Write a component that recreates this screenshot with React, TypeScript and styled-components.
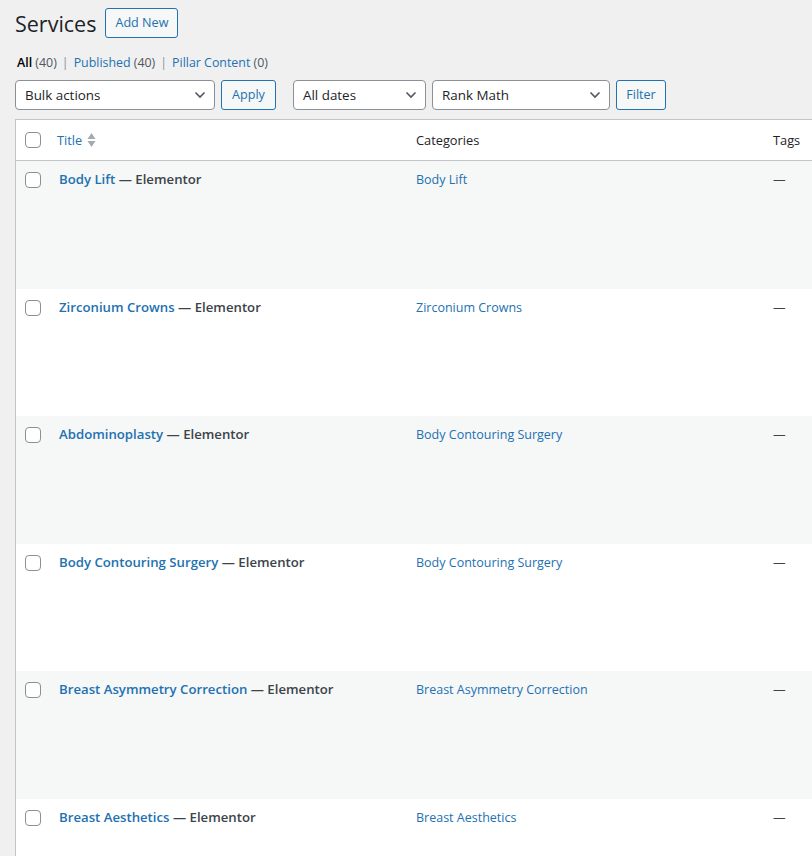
import React from 'react';
import styled, { createGlobalStyle } from 'styled-components';

const colors = {
  bg: '#f0f0f1',
  link: '#2271b1',
  text: '#3c434a',
  dark: '#1d2327',
  muted: '#50575e',
  border: '#c3c4c7',
  field: '#8c8f94',
  stripe: '#f6f7f7',
  white: '#ffffff',
};

const GlobalStyle = createGlobalStyle`
  html, body {
    margin: 0;
    background: ${colors.bg};
    overflow: hidden;
  }
  body {
    font-family: "Open Sans", "Noto Sans", sans-serif;
    font-size: 12.6px;
    color: ${colors.text};
  }
`;

const Page = styled.div`
  padding: 8px 0 0 15px;
  width: 900px;
`;

const Header = styled.div`
  display: flex;
  align-items: center;
  gap: 9px;
`;

const Heading = styled.h1`
  margin: 0;
  font-size: 21.5px;
  font-weight: 400;
  line-height: 29px;
  color: ${colors.dark};
`;

const Button = styled.button<{ $width?: number }>`
  box-sizing: border-box;
  height: 30px;
  width: ${(p) => (p.$width ? `${p.$width}px` : 'auto')};
  padding: 0 9px;
  font-family: inherit;
  font-size: 12.6px;
  color: ${colors.link};
  background: ${colors.stripe};
  border: 1px solid ${colors.link};
  border-radius: 3px;
  line-height: 1;
`;

const Views = styled.ul`
  display: flex;
  margin: 12px 0 0 2px;
  padding: 0;
  list-style: none;
  line-height: 26px;
  font-size: 12.4px;
  color: ${colors.muted};
`;

const ViewItem = styled.li`
  & + &::before {
    content: '|';
    margin: 0 5px;
    color: #8c8f94;
  }
`;

const ViewLink = styled.a<{ $current?: boolean }>`
  color: ${(p) => (p.$current ? '#000' : colors.link)};
  font-weight: ${(p) => (p.$current ? 600 : 400)};
  text-decoration: none;
`;

const Count = styled.span`
  color: ${colors.muted};
  font-weight: 400;
`;

const TableNav = styled.div`
  display: flex;
  align-items: center;
  margin-top: 4px;
  height: 30px;
`;

const Group = styled.div`
  display: flex;
  gap: 6px;
  & + & {
    margin-left: 17px;
  }
`;

const Select = styled.div<{ $width: number }>`
  box-sizing: border-box;
  width: ${(p) => p.$width}px;
  height: 30px;
  display: flex;
  align-items: center;
  justify-content: space-between;
  padding: 0 8px 0 9px;
  background: ${colors.white};
  border: 1px solid ${colors.field};
  border-radius: 4px;
  font-size: 13.4px;
  color: ${colors.dark};
`;

const Table = styled.div`
  margin-top: 9px;
  width: 849px;
  border: 1px solid ${colors.border};
  background: ${colors.white};
`;

const Row = styled.div<{ $striped?: boolean; $head?: boolean }>`
  display: grid;
  grid-template-columns: 32px 358px 357px 100px;
  height: ${(p) => (p.$head ? '40px' : '127.6px')};
  background: ${(p) => (p.$striped ? colors.stripe : colors.white)};
  border-bottom: ${(p) => (p.$head ? `1px solid ${colors.border}` : 'none')};
  align-items: ${(p) => (p.$head ? 'center' : 'start')};
`;

const CheckCell = styled.div<{ $head?: boolean }>`
  padding: ${(p) => (p.$head ? '0' : '11px')} 0 0 9px;
  display: flex;
`;

const Checkbox = styled.span`
  box-sizing: border-box;
  width: 16px;
  height: 16px;
  border: 1px solid ${colors.field};
  border-radius: 4px;
  background: ${colors.white};
`;

const HeadCell = styled.div<{ $pad?: number }>`
  padding-left: ${(p) => p.$pad ?? 10}px;
  font-size: 12.8px;
  color: ${colors.dark};
  display: flex;
  align-items: center;
  gap: 5px;
`;

const SortLink = styled.a`
  color: ${colors.link};
  text-decoration: none;
`;

const Cell = styled.div<{ $pad?: number; $top?: number }>`
  padding: ${(p) => p.$top ?? 8}px 0 0 ${(p) => p.$pad ?? 10}px;
  line-height: 20px;
`;

const RowTitle = styled.strong`
  font-size: 13.2px;
  font-weight: 600;
  color: ${colors.text};
`;

const TitleLink = styled.a`
  color: ${colors.link};
  text-decoration: none;
`;

const CatLink = styled.a`
  color: ${colors.link};
  text-decoration: none;
  font-size: 12.5px;
`;

const Dash = styled.span`
  color: ${colors.text};
`;

const Chevron = () => (
  <svg width="12" height="8" viewBox="0 0 12 8" aria-hidden>
    <path d="M1.5 1.5 L6 6 L10.5 1.5" fill="none" stroke="#50575e" strokeWidth="1.6" />
  </svg>
);

const SortIcon = () => (
  <svg width="9" height="16" viewBox="0 0 9 16" aria-hidden>
    <path d="M4.5 1 L8.5 7 H0.5 Z" fill="#a7aaad" />
    <path d="M4.5 15 L8.5 9 H0.5 Z" fill="#a7aaad" />
  </svg>
);

const posts = [
  { title: 'Body Lift', category: 'Body Lift' },
  { title: 'Zirconium Crowns', category: 'Zirconium Crowns' },
  { title: 'Abdominoplasty', category: 'Body Contouring Surgery' },
  { title: 'Body Contouring Surgery', category: 'Body Contouring Surgery' },
  { title: 'Breast Asymmetry Correction', category: 'Breast Asymmetry Correction' },
  { title: 'Breast Aesthetics', category: 'Breast Aesthetics' },
];

export default function App() {
  return (
    <>
      <GlobalStyle />
      <Page>
        <Header>
          <Heading>Services</Heading>
          <Button>Add New</Button>
        </Header>

        <Views>
          <ViewItem>
            <ViewLink $current>
              All <Count>(40)</Count>
            </ViewLink>
          </ViewItem>
          <ViewItem>
            <ViewLink>
              Published <Count>(40)</Count>
            </ViewLink>
          </ViewItem>
          <ViewItem>
            <ViewLink>
              Pillar Content <Count>(0)</Count>
            </ViewLink>
          </ViewItem>
        </Views>

        <TableNav>
          <Group>
            <Select $width={200}>
              Bulk actions <Chevron />
            </Select>
            <Button $width={55}>Apply</Button>
          </Group>
          <Group>
            <Select $width={133}>
              All dates <Chevron />
            </Select>
            <Select $width={178}>
              Rank Math <Chevron />
            </Select>
            <Button $width={50}>Filter</Button>
          </Group>
        </TableNav>

        <Table>
          <Row $head>
            <CheckCell $head>
              <Checkbox />
            </CheckCell>
            <HeadCell $pad={9}>
              <SortLink>Title</SortLink>
              <SortIcon />
            </HeadCell>
            <HeadCell>Categories</HeadCell>
            <HeadCell>Tags</HeadCell>
          </Row>
          {posts.map((post, i) => (
            <Row key={post.title} $striped={i % 2 === 0}>
              <CheckCell>
                <Checkbox />
              </CheckCell>
              <Cell $pad={11}>
                <RowTitle>
                  <TitleLink>{post.title}</TitleLink> — Elementor
                </RowTitle>
              </Cell>
              <Cell $top={9}>
                <CatLink>{post.category}</CatLink>
              </Cell>
              <Cell $top={9}>
                <Dash>—</Dash>
              </Cell>
            </Row>
          ))}
        </Table>
      </Page>
    </>
  );
}
